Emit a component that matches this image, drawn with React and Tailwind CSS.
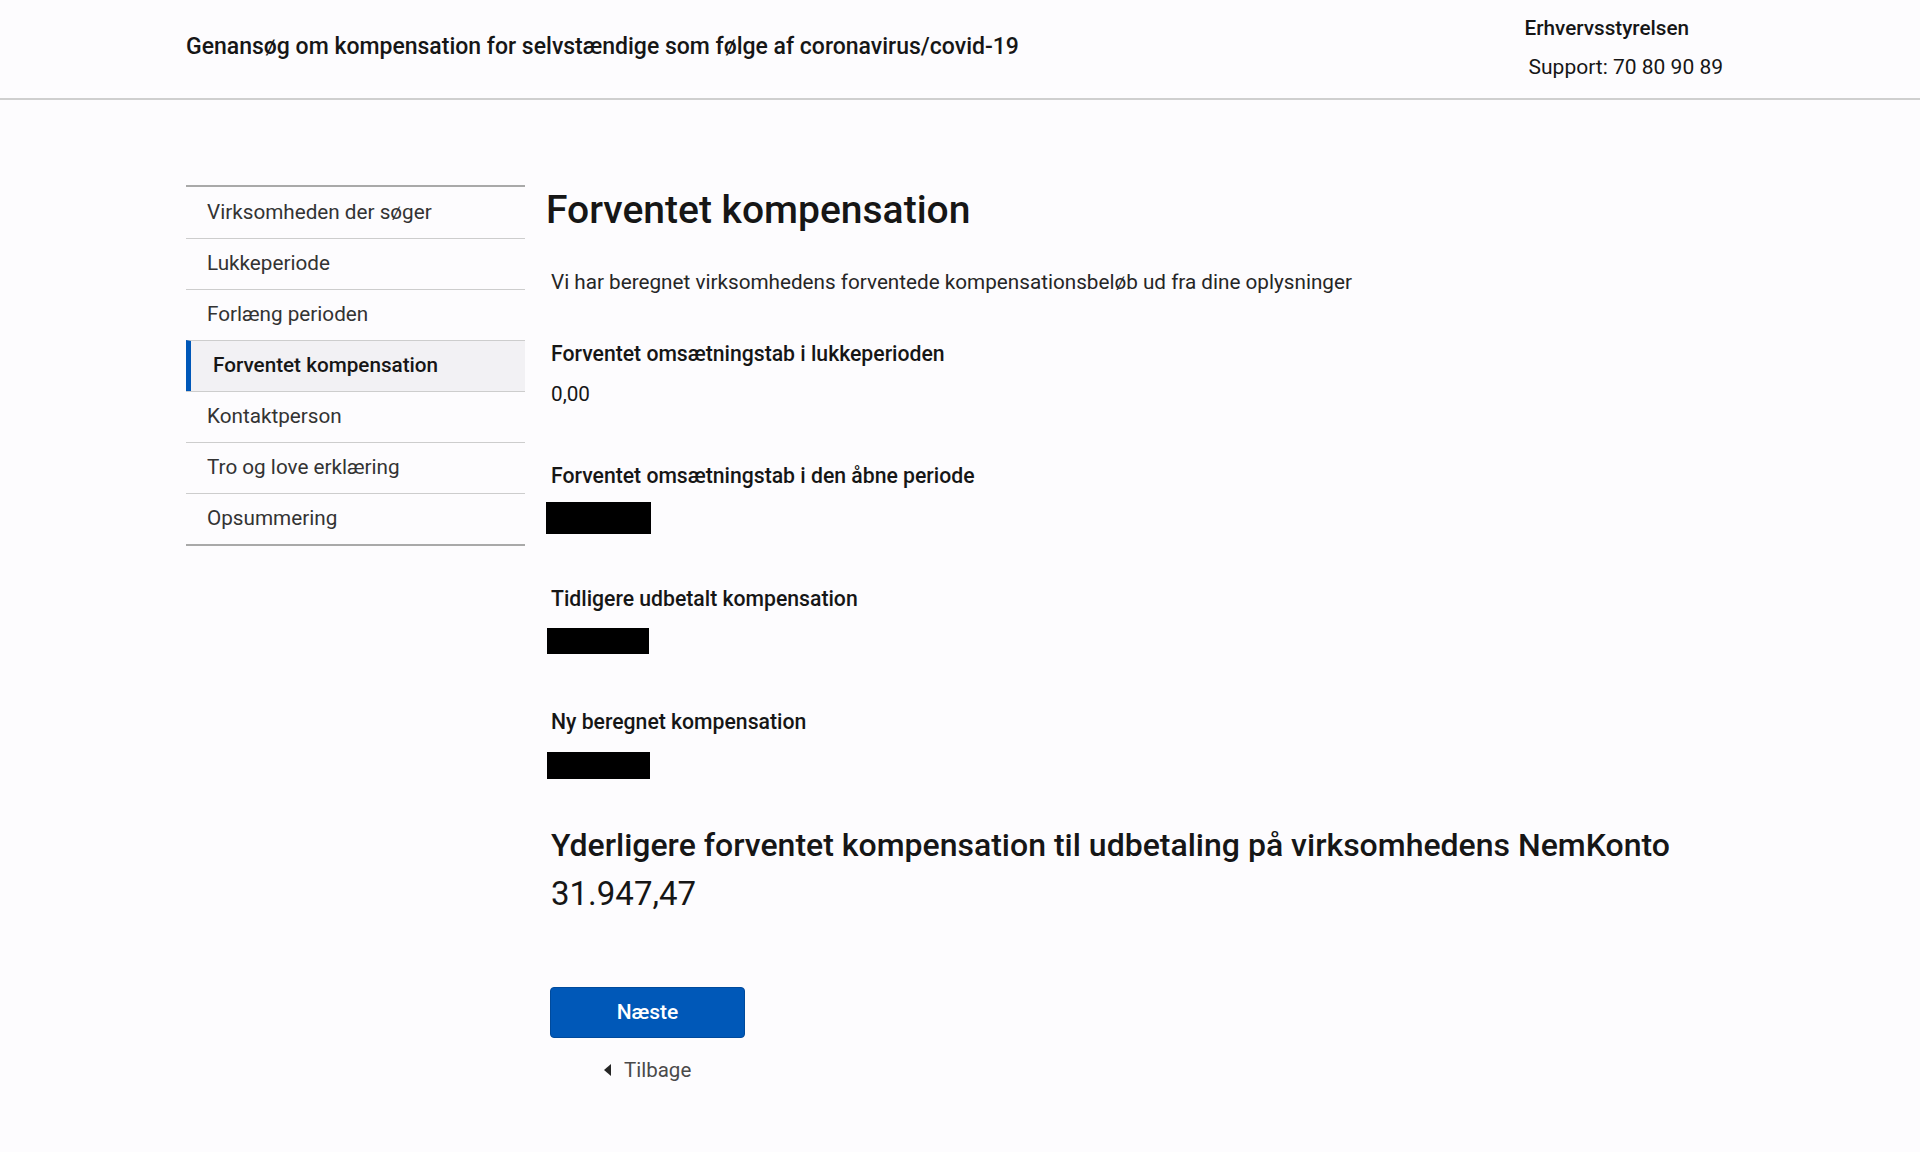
import React from 'react';

const steps = [
  'Virksomheden der søger',
  'Lukkeperiode',
  'Forlæng perioden',
  'Forventet kompensation',
  'Kontaktperson',
  'Tro og love erklæring',
  'Opsummering',
];

const Redacted = ({ className }) => <div className={`bg-black ${className}`} />;

const App = () => {
  const active = 'Forventet kompensation';

  return (
    <div className="min-h-screen bg-[#fdfcfe] text-[#161616]" style={{ fontFamily: 'Roboto, "Liberation Sans", sans-serif' }}>
      <header className="h-[100px] border-b-2 border-[#cfcfcf]">
        <div className="mx-auto flex h-full w-[1548px] items-start justify-between">
          <h1 className="mt-[32px] text-[23px] leading-[30px] font-medium">
            Genansøg om kompensation for selvstændige som følge af coronavirus/covid-19
          </h1>
          <div className="mr-[11px] mt-[15px]">
            <div className="text-[20.7px] leading-[26px] font-medium">Erhvervsstyrelsen</div>
            <div className="mt-[13px] pl-[4px] text-[21px] leading-[26px]">Support: 70 80 90 89</div>
          </div>
        </div>
      </header>

      <main className="mx-auto flex w-[1548px] items-start pt-[85px]">
        <nav className="w-[339px] shrink-0 border-y-2 border-[#a9a9a9]">
          {steps.map((step, i) => {
            const isActive = step === active;
            return (
              <div
                key={step}
                className={`flex h-[51px] items-center text-[20.7px] ${i > 0 ? 'border-t border-[#cdcdcd]' : ''} ${
                  isActive ? 'border-l-[5px] border-l-[#0057b8] bg-[#f2f1f4] pl-[22px] font-medium text-[#161616]' : 'pl-[21px] text-[#333333]'
                }`}
              >
                {step}
              </div>
            );
          })}
        </nav>

        <section className="ml-[21px] flex-1">
          <h2 className="mt-[3px] text-[39px] leading-[44px] font-medium">Forventet kompensation</h2>

          <div className="pl-[5px]">
            <p className="mt-[36px] text-[20.7px] leading-[28px] text-[#262626]">
              Vi har beregnet virksomhedens forventede kompensationsbeløb ud fra dine oplysninger
            </p>

            <div className="mt-[44px] text-[21.2px] leading-[28px] font-medium">Forventet omsætningstab i lukkeperioden</div>
            <div className="mt-[12px] text-[20.7px] leading-[28px]">0,00</div>

            <div className="mt-[54px] text-[21.2px] leading-[28px] font-medium">Forventet omsætningstab i den åbne periode</div>
            <Redacted className="-ml-[5px] mt-[12px] h-[32px] w-[105px]" />

            <div className="mt-[51px] text-[21.2px] leading-[28px] font-medium">Tidligere udbetalt kompensation</div>
            <Redacted className="-ml-[4px] mt-[15px] h-[26px] w-[102px]" />

            <div className="mt-[54px] text-[21.2px] leading-[28px] font-medium">Ny beregnet kompensation</div>
            <Redacted className="-ml-[4px] mt-[16px] h-[27px] w-[103px]" />

            <h3 className="mt-[46px] text-[32px] leading-[40px] font-medium">
              Yderligere forventet kompensation til udbetaling på virksomhedens NemKonto
            </h3>
            <div className="mt-[9px] text-[33px] leading-[40px]">31.947,47</div>

            <button className="-ml-[1px] mt-[73px] flex h-[51px] w-[195px] items-center justify-center rounded-[4px] border border-[#004a9c] bg-[#0058b8] text-[21px] font-medium text-white">
              Næste
            </button>

            <div className="mt-[18px] flex items-center pl-[53px] text-[20.5px] leading-[28px] text-[#4a4a4a]">
              <svg width="8" height="12" viewBox="0 0 8 12" className="mr-[12px]">
                <path d="M7 0 L0 6 L7 12 Z" fill="#262626" />
              </svg>
              Tilbage
            </div>
          </div>
        </section>
      </main>
    </div>
  );
};

export default App;
